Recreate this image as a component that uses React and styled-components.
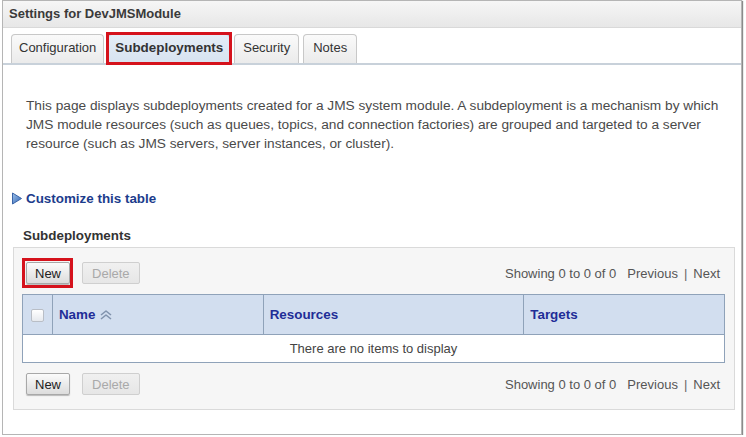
import React from "react";
import styled, { createGlobalStyle } from "styled-components";

const Global = createGlobalStyle`
  html, body { margin: 0; padding: 0; background: #ffffff; }
  body { font-family: "Liberation Sans", Arial, sans-serif; }
`;

const Frame = styled.div`
  margin-left: 2px;
  width: 738px;
  height: 433px;
  border: 1px solid #b5b5b5;
  box-shadow: 1px 1px 1px #8a8a8a;
  background: #fff;
  box-sizing: content-box;
  overflow: hidden;
  font-size: 13px;
`;

const Header = styled.div`
  height: 26px;
  line-height: 26px;
  padding-left: 6px;
  font-size: 13px;
  font-weight: bold;
  color: #3a3a3a;
  background: linear-gradient(#f6f6f6, #e7e7e7);
  border-bottom: 1px solid #d9d9d9;
`;

const TabBar = styled.div`
  display: flex;
  align-items: flex-end;
  gap: 4px;
  padding: 6px 0 0 8px;
  border-bottom: 2px solid #c8d1da;
`;

const Tab = styled.div`
  position: relative;
  height: 28px;
  line-height: 25px;
  padding: 0 ${(p) => p.$pad || 9}px;
  font-size: ${(p) => (p.$active ? 13.4 : 13)}px;
  font-weight: ${(p) => (p.$active ? "bold" : "normal")};
  color: #333;
  border: 1px solid ${(p) => (p.$active ? "#b9c6d4" : "#c8c8c8")};
  border-bottom: none;
  border-radius: 4px 4px 0 0;
  background: ${(p) =>
    p.$active ? "linear-gradient(#e4edf7, #d7e3f0)" : "linear-gradient(#fafafa, #ebebeb)"};

  &::after {
    content: "";
    display: ${(p) => (p.$active ? "block" : "none")};
    position: absolute;
    left: -3px;
    right: -3px;
    top: -3px;
    bottom: -2px;
    border: 3px solid #d5121c;
  }
`;

const Description = styled.p`
  margin: 31px 0 0 0;
  padding-left: 23px;
  font-size: 13.7px;
  line-height: 19px;
  color: #4a4a4a;
  white-space: nowrap;
`;

const Customize = styled.div`
  display: flex;
  align-items: center;
  gap: 3px;
  margin: 38px 0 0 8px;
  font-size: 13.4px;
  font-weight: bold;
  color: #1c3c8c;
`;

const SectionTitle = styled.div`
  margin: 22px 0 0 20px;
  font-size: 13.4px;
  font-weight: bold;
  line-height: 16px;
  color: #333;
`;

const TableBox = styled.div`
  margin: 3px 0 0 10px;
  width: 722px;
  box-sizing: border-box;
  background: #f6f6f6;
  border: 1px solid #dadada;
  padding: 14px 10px 14px 8px;
`;

const ControlRow = styled.div`
  display: flex;
  align-items: center;
  justify-content: space-between;
  height: 22px;
  padding-left: 4px;
  padding-right: 4px;
`;

const Buttons = styled.div`
  display: flex;
  gap: 12px;
`;

const Button = styled.button`
  position: relative;
  height: 22px;
  padding: 0 ${(p) => p.$pad}px;
  font-family: "Liberation Sans", Arial, sans-serif;
  font-size: 13px;
  color: ${(p) => (p.disabled ? "#a9a9a9" : "#222")};
  border: 1px solid ${(p) => (p.disabled ? "#cfcfcf" : "#a8a8a8")};
  border-radius: 2px;
  background: ${(p) =>
    p.disabled ? "linear-gradient(#f0f0f0, #e6e6e6)" : "linear-gradient(#fbfbfb, #dcdcdc)"};
  box-shadow: ${(p) => (p.disabled ? "none" : "0 1px 1px rgba(0,0,0,0.25)")};

  &::after {
    content: "";
    display: ${(p) => (p.$highlight ? "block" : "none")};
    position: absolute;
    left: -5px;
    right: -4px;
    top: -5px;
    bottom: -5px;
    border: 3px solid #d5121c;
  }
`;

const Pager = styled.div`
  font-size: 13px;
  color: #555;
  display: flex;
  gap: 5px;
  align-items: center;
`;

const Gap = styled.span`
  width: 1px;
`;

const Sep = styled.span`
  color: #666;
  margin: 0 1px;
`;

const Table = styled.table`
  margin: 10px 0 10px 0;
  width: 703px;
  border-collapse: collapse;
  background: #fff;
  font-size: 13px;
`;

const Th = styled.th`
  height: 40px;
  padding: 0 0 0 ${(p) => p.$pl ?? 6}px;
  text-align: ${(p) => (p.$center ? "center" : "left")};
  background: #d2deef;
  border: 1px solid #8fa2b9;
  color: #1f2d97;
  font-size: 13.4px;
  font-weight: bold;
  width: ${(p) => p.$w}px;
  box-sizing: border-box;
`;

const Td = styled.td`
  height: 27px;
  padding: 0;
  text-align: center;
  color: #444;
  border: 1px solid #8fa2b9;
`;

const Check = styled.span`
  display: inline-block;
  width: 11px;
  height: 11px;
  border: 1px solid #b9bec6;
  border-radius: 2px;
  background: linear-gradient(#ffffff, #e6e9ee);
  vertical-align: middle;
`;

const NameCell = styled.span`
  display: inline-flex;
  align-items: center;
  gap: 4px;
`;

function Pagination() {
  return (
    <Pager>
      <span>Showing 0 to 0 of 0</span>
      <Gap />
      <span>Previous</span>
      <Sep>|</Sep>
      <span>Next</span>
    </Pager>
  );
}

export default function App() {
  return (
    <>
      <Global />
      <Frame>
        <Header>Settings for DevJMSModule</Header>
        <TabBar>
          <Tab $pad={7}>Configuration</Tab>
          <Tab $active $pad={6}>Subdeployments</Tab>
          <Tab $pad={8}>Security</Tab>
          <Tab $pad={9}>Notes</Tab>
        </TabBar>
        <Description>
          This page displays subdeployments created for a JMS system module. A subdeployment is a mechanism by which
          <br />
          JMS module resources (such as queues, topics, and connection factories) are grouped and targeted to a server
          <br />
          resource (such as JMS servers, server instances, or cluster).
        </Description>
        <Customize>
          <svg width="12" height="13" viewBox="0 0 12 13">
            <defs>
              <linearGradient id="tri" x1="0" y1="0" x2="1" y2="1">
                <stop offset="0" stopColor="#9fc3ea" />
                <stop offset="1" stopColor="#2f63b4" />
              </linearGradient>
            </defs>
            <path d="M1.5 1 L10.5 6.5 L1.5 12 Z" fill="url(#tri)" stroke="#3a64a8" strokeWidth="1" strokeLinejoin="round" />
          </svg>
          Customize this table
        </Customize>
        <SectionTitle>Subdeployments</SectionTitle>
        <TableBox>
          <ControlRow>
            <Buttons>
              <Button $pad={8} $highlight>New</Button>
              <Button $pad={9} disabled>Delete</Button>
            </Buttons>
            <Pagination />
          </ControlRow>
          <Table>
            <thead>
              <tr>
                <Th $w={30} $pl={0} $center>
                  <Check />
                </Th>
                <Th $w={211}>
                  <NameCell>
                    Name
                    <svg width="14" height="10" viewBox="0 0 14 10">
                      <path d="M2 5 L7 1 L12 5 M2 9 L7 5 L12 9" fill="none" stroke="#8193ad" strokeWidth="1.6" strokeLinejoin="round" />
                    </svg>
                  </NameCell>
                </Th>
                <Th $w={261}>Resources</Th>
                <Th $w={201}>Targets</Th>
              </tr>
            </thead>
            <tbody>
              <tr>
                <Td colSpan={4}>There are no items to display</Td>
              </tr>
            </tbody>
          </Table>
          <ControlRow>
            <Buttons>
              <Button $pad={8}>New</Button>
              <Button $pad={9} disabled>Delete</Button>
            </Buttons>
            <Pagination />
          </ControlRow>
        </TableBox>
      </Frame>
    </>
  );
}
